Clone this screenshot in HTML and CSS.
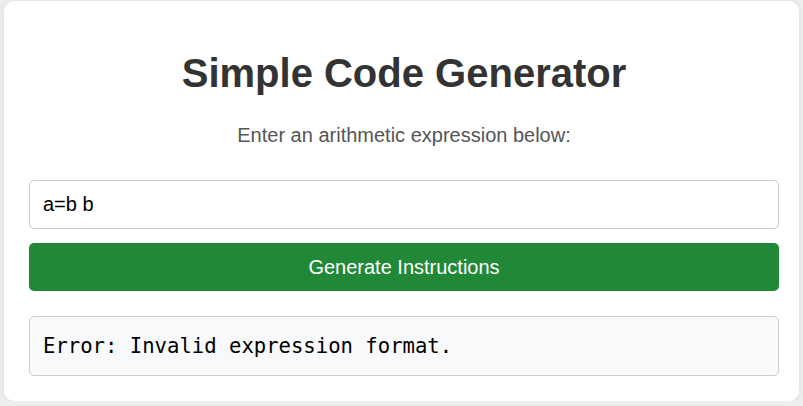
FILE: index.html
```html
<!DOCTYPE html>
<html lang="en">
<head>
<meta charset="utf-8">
<title>Simple Code Generator</title>
<link rel="stylesheet" href="styles.css">
</head>
<body>
<div class="card">
  <h1 class="title">Simple Code Generator</h1>
  <p class="subtitle">Enter an arithmetic expression below:</p>
  <input class="expr" type="text" value="a=b b">
  <button class="generate" type="button">Generate Instructions</button>
  <div class="output">Error: Invalid expression format.</div>
</div>
</body>
</html>
```
FILE: styles.css
```css
html, body {
  margin: 0;
  padding: 0;
}
body {
  background: #eeeeee;
  font-family: "Liberation Sans", Arial, sans-serif;
  overflow: hidden;
}
.card {
  box-sizing: border-box;
  width: 795px;
  height: 400px;
  margin: 1px 0 0 4px;
  padding: 24px 20px 25px 25px;
  background: #ffffff;
  border-radius: 10px;
  box-shadow: 0 0 6px rgba(0, 0, 0, 0.08);
  display: flex;
  flex-direction: column;
}
.title {
  margin: 25px 0 0;
  font-size: 40px;
  font-weight: bold;
  color: #333333;
  text-align: center;
  line-height: 46px;
}
.subtitle {
  margin: 28px 0 0;
  font-size: 20px;
  line-height: 23px;
  color: #555555;
  text-align: center;
}
.expr {
  box-sizing: border-box;
  margin-top: 33px;
  width: 100%;
  height: 50px;
  padding: 0 13px;
  border: 1px solid #cccccc;
  border-radius: 5px;
  font-family: "Liberation Sans", Arial, sans-serif;
  font-size: 20px;
  color: #000000;
  outline: none;
}
.generate {
  box-sizing: border-box;
  margin-top: 14px;
  width: 100%;
  height: 48px;
  border: none;
  border-radius: 5px;
  background: #218838;
  color: #ffffff;
  font-family: "Liberation Sans", Arial, sans-serif;
  font-size: 20px;
}
.output {
  box-sizing: border-box;
  margin-top: 25px;
  height: 60px;
  padding: 15px 13px;
  border: 1px solid #cccccc;
  border-radius: 5px;
  background: #f8f9fa;
  font-family: "DejaVu Sans Mono", monospace;
  font-size: 20.6px;
  line-height: 28px;
  color: #000000;
  white-space: pre;
}
```
